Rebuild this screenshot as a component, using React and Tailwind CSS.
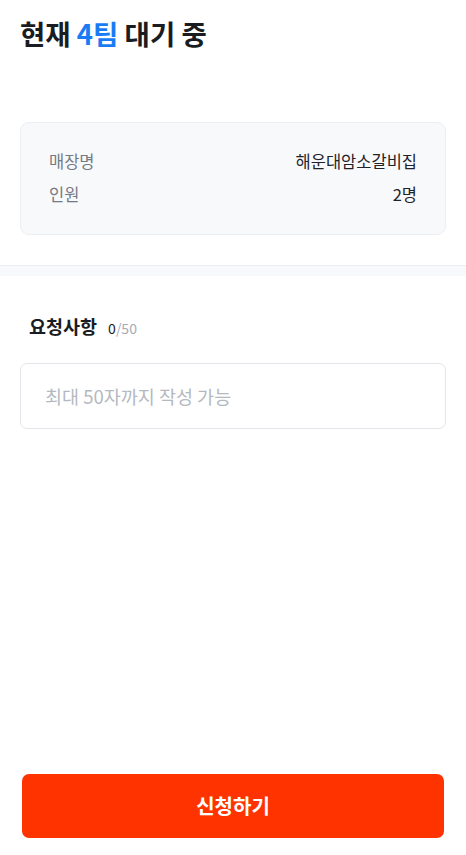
const FONT = { fontFamily: '"Noto Sans CJK KR", "Noto Sans", sans-serif' };

function InfoRow({ label, value }) {
  return (
    <div className="flex items-center justify-between leading-[24px]">
      <span className="text-[16.5px] text-[#737a85]">{label}</span>
      <span className="text-[16.5px] text-[#1f2329]">{value}</span>
    </div>
  );
}

export default function App() {
  return (
    <div className="flex min-h-[855px] w-full flex-col bg-white" style={FONT}>
      <h1 className="px-5 pt-[13px] text-[27.5px] font-bold leading-[40px] text-[#191c21]">
        현재 <span className="text-[#1a7cf5]">4팀</span> 대기 중
      </h1>

      <section className="mx-5 mt-[69px] flex flex-col gap-[9px] rounded-[9px] border border-[#eceef2] bg-[#f8f9fb] px-7 pb-[28px] pt-[26px]">
        <InfoRow label="매장명" value="해운대암소갈비집" />
        <InfoRow label="인원" value="2명" />
      </section>

      <div className="mt-[30px] h-[11px] border-t border-[#eaedf1] bg-[#f8f9fb]" />

      <section className="px-5 pt-[37px]">
        <div className="flex items-baseline gap-[11px] px-[9px] leading-[27px]">
          <h2 className="text-[18.5px] font-bold text-[#191c21]">요청사항</h2>
          <span className="text-[14px] text-[#191c21]">
            0<span className="text-[#a6abb3]">/50</span>
          </span>
        </div>
        <textarea
          rows={1}
          placeholder="최대 50자까지 작성 가능"
          className="mt-[21px] h-[66px] w-full resize-none rounded-[7px] border border-[#e3e6eb] px-6 py-[19px] text-[18.5px] leading-[26px] text-[#191c21] outline-none placeholder:text-[#b4b9c1]"
          style={FONT}
        />
      </section>

      <div className="flex-1" />

      <div className="px-[22px] pb-[17px]">
        <button className="h-[64px] w-full rounded-[7px] bg-[#ff3300] text-[20px] font-bold text-white">
          신청하기
        </button>
      </div>
    </div>
  );
}
